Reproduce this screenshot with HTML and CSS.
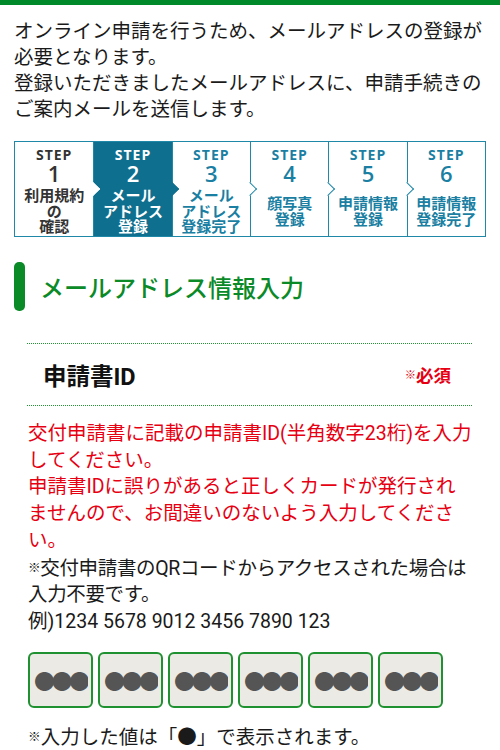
FILE: index.html
```html
<!DOCTYPE html>
<html lang="ja">
<head>
<meta charset="utf-8">
<title>メールアドレス情報入力</title>
<link rel="stylesheet" href="styles.css">
</head>
<body>
<div class="topbar"></div>
<main class="page">
  <p class="intro">オンライン申請を行うため、メールアドレスの登録が必要となります。<br>登録いただきましたメールアドレスに、申請手続きのご案内メールを送信します。</p>

  <ol class="steps">
    <li class="step step-done">
      <span class="step-word">STEP</span>
      <span class="step-num">1</span>
      <span class="step-label">利用規約<br>の<br>確認</span>
    </li>
    <li class="step step-current">
      <span class="step-word">STEP</span>
      <span class="step-num">2</span>
      <span class="step-label">メール<br>アドレス<br>登録</span>
    </li>
    <li class="step step-next">
      <span class="step-word">STEP</span>
      <span class="step-num">3</span>
      <span class="step-label">メール<br>アドレス<br>登録完了</span>
    </li>
    <li class="step">
      <span class="step-word">STEP</span>
      <span class="step-num">4</span>
      <span class="step-label">顔写真<br>登録</span>
    </li>
    <li class="step">
      <span class="step-word">STEP</span>
      <span class="step-num">5</span>
      <span class="step-label">申請情報<br>登録</span>
    </li>
    <li class="step">
      <span class="step-word">STEP</span>
      <span class="step-num">6</span>
      <span class="step-label">申請情報<br>登録完了</span>
    </li>
  </ol>

  <h2 class="heading">メールアドレス情報入力</h2>

  <section class="form">
    <div class="field-head">
      <span class="field-label">申請書ID</span>
      <span class="field-req"><span class="kome">※</span>必須</span>
    </div>
    <div class="notes">
      <p class="warn">交付申請書に記載の申請書ID(半角数字23桁)を入力してください。</p>
      <p class="warn">申請書IDに誤りがあると正しくカードが発行されませんので、お間違いのないよう入力してください。</p>
      <p class="tight"><span class="kome">※</span>交付申請書のQRコードからアクセスされた場合は入力不要です。</p>
      <p>例)1234 5678 9012 3456 7890 123</p>
    </div>
    <div class="inputs">
      <div class="box"><span class="val">●●●●</span></div>
      <div class="box"><span class="val">●●●●</span></div>
      <div class="box"><span class="val">●●●●</span></div>
      <div class="box"><span class="val">●●●●</span></div>
      <div class="box"><span class="val">●●●●</span></div>
      <div class="box"><span class="val">●●●●</span></div>
    </div>
    <p class="hint"><span class="kome">※</span>入力した値は「●」で表示されます。</p>
  </section>
</main>
</body>
</html>
```

FILE: styles.css
```css
body {
  margin: 0;
  background: #fff;
  color: #1a1a1a;
  font-family: Roboto, "Noto Sans CJK JP", sans-serif;
}

.topbar {
  height: 5px;
  background: #00892b;
}

.page {
  padding: 0 14px;
}

.intro {
  margin: 13.5px 0 0;
  font-size: 19.5px;
  line-height: 26px;
}

/* steps */
.steps {
  margin: 18.5px 0 0;
  padding: 0;
  list-style: none;
  display: grid;
  grid-template-columns: repeat(6, 1fr);
  height: 96px;
  box-sizing: border-box;
  border: 1.5px solid #1f87a8;
}

.step {
  position: relative;
  display: flex;
  flex-direction: column;
  align-items: center;
  padding-top: 5px;
  color: #1a7fa2;
  text-align: center;
}

.step + .step {
  border-left: 1.5px solid #1f87a8;
}

.step + .step::before {
  content: "";
  position: absolute;
  left: -6px;
  top: 50%;
  width: 9px;
  height: 9px;
  margin-top: -5px;
  transform: rotate(45deg);
  background: #fff;
  border-top: 1.5px solid #1f87a8;
  border-right: 1.5px solid #1f87a8;
}

.step-done {
  color: #333;
}

.step-current {
  background: #0f6f8e;
  color: #fff;
}

.step-current::before {
  border-color: #fff !important;
}

.step-next::before {
  background: #0f6f8e !important;
  border-color: #0f6f8e !important;
}

.step-word {
  font-family: "Open Sans", sans-serif;
  font-weight: 700;
  font-size: 14px;
  line-height: 15px;
  letter-spacing: 1px;
}

.step-num {
  font-family: "Open Sans", sans-serif;
  font-weight: 600;
  font-size: 22px;
  line-height: 23px;
}

.step-label {
  flex: 1;
  display: flex;
  align-items: center;
  justify-content: center;
  padding-top: 4px;
  font-size: 15px;
  line-height: 15.5px;
  font-weight: 700;
  white-space: nowrap;
}

/* heading */
.heading {
  margin: 25px 0 0;
  display: flex;
  align-items: center;
  gap: 15px;
  height: 49px;
  font-size: 24px;
  font-weight: 500;
  color: #0b8a28;
}

.heading::before {
  content: "";
  width: 11px;
  height: 49px;
  border-radius: 5px;
  background: #0b8a28;
}

/* form */
.form {
  margin: 0 14px 0 13px;
}

.field-head {
  margin-top: 32px;
  height: 61px;
  display: flex;
  justify-content: space-between;
  align-items: center;
  padding: 0 21px 0 16px;
  border-top: 1px dotted #1f9433;
  border-bottom: 1px dotted #1f9433;
}

.field-label {
  font-size: 23.5px;
  font-weight: 700;
  color: #111;
}

.field-req {
  font-size: 17.5px;
  font-weight: 700;
  color: #e60012;
}

.kome {
  font-size: 0.65em;
  vertical-align: 0.25em;
}

.notes {
  margin-top: 15px;
  padding-left: 1px;
  font-size: 19.5px;
  line-height: 26.7px;
}

.notes p {
  margin: 0;
}

.notes .warn {
  color: #e60012;
}

.notes .tight {
  letter-spacing: -0.35px;
}

.inputs {
  margin: 16.5px 0 0 1px;
  display: flex;
  gap: 5px;
}

.box {
  width: 65px;
  height: 56px;
  box-sizing: border-box;
  border: 2px solid #1f9130;
  border-radius: 6px;
  background: #ebeae5;
  display: flex;
  align-items: center;
  padding-left: 4px;
  overflow: hidden;
}

.val {
  display: block;
  width: 54px;
  overflow: hidden;
  white-space: nowrap;
  font-family: "Noto Sans CJK JP", sans-serif;
  font-size: 21px;
  line-height: 24px;
  letter-spacing: -3.5px;
  color: #555;
}

.hint {
  margin: 16px 0 0 1px;
  font-size: 19.5px;
  line-height: 26.7px;
}
```
